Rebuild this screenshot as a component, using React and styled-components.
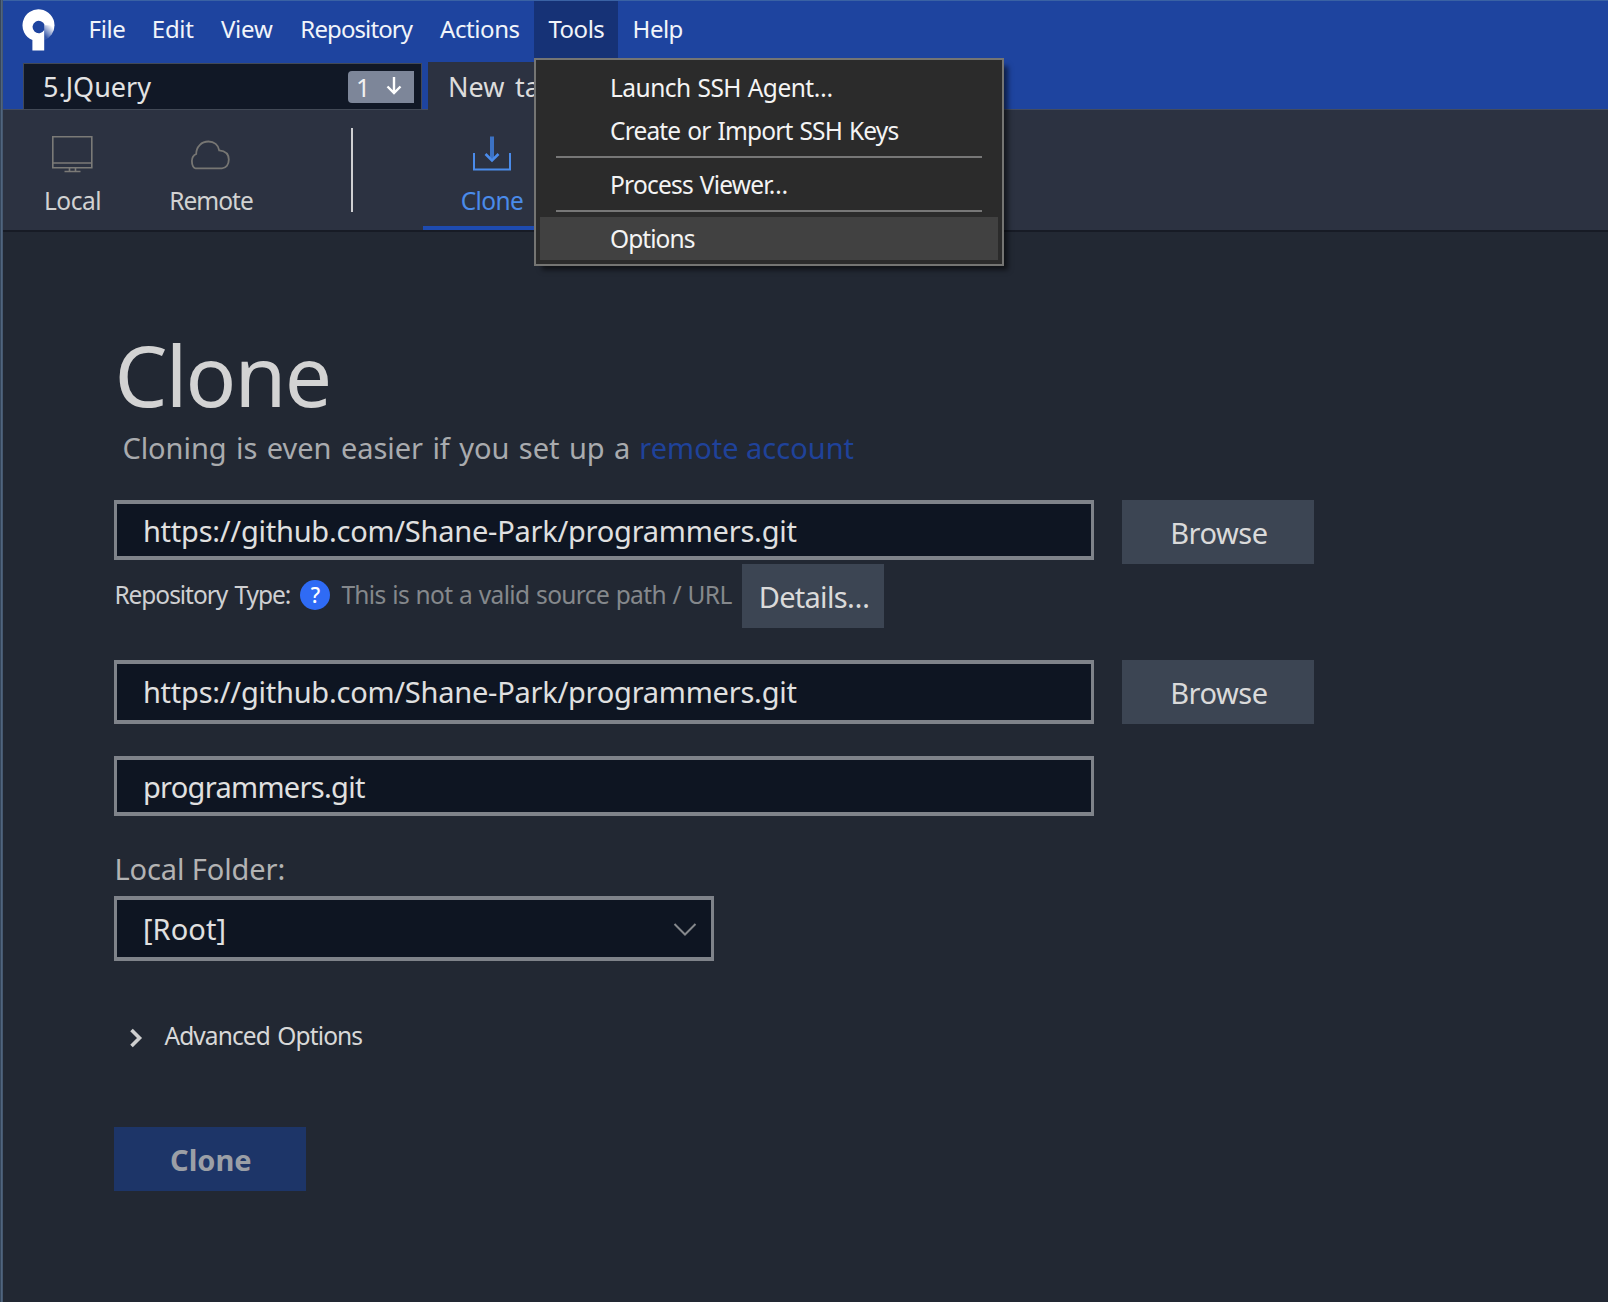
import React from "react";
import styled, { createGlobalStyle } from "styled-components";

const GlobalStyle = createGlobalStyle`
  * { box-sizing: border-box; }
  html, body { margin: 0; height: 100%; background: #222833; }
  body { font-family: "Noto Sans", "Noto Sans CJK KR", sans-serif; overflow: hidden; }
  button, input { font-family: inherit; }
`;

const Window = styled.div`
  position: relative;
  display: flex;
  flex-direction: column;
  width: 1608px;
  height: 1302px;
  padding-left: 3px;
  background: linear-gradient(90deg, #36475c 0 1px, #50657f 1px 2px, #46586f 2px 3px, #222833 3px);
`;

const Text = styled.span`
  font-size: ${(p) => p.$size || 24.5}px;
  letter-spacing: ${(p) => p.$ls || 0}px;
  word-spacing: ${(p) => p.$ws || 0}px;
  color: ${(p) => p.$color || "inherit"};
  white-space: pre;
`;

/* Title bar with menus and tabs */
const Header = styled.header`
  display: flex;
  flex-direction: column;
  height: 110px;
  flex: none;
  background: #1e449f;
  border-top: 1px solid #3a62a4;
`;

const MenuBar = styled.nav`
  display: flex;
  height: 57px;
  padding-left: 19px;
  flex: none;
`;

const Logo = styled.svg`
  width: 34px;
  height: 42px;
  margin: 8px 19px 0 0;
  flex: none;
`;

const MenuItem = styled.div`
  display: flex;
  align-items: center;
  justify-content: center;
  width: ${(p) => p.$w}px;
  padding-bottom: 2px;
  flex: none;
  color: #f1f4fa;
  background: ${(p) => (p.$open ? "#163276" : "transparent")};
`;

const TabStrip = styled.div`
  display: flex;
  align-items: stretch;
  height: 52px;
  padding: 4px 0 0 20px;
  background: linear-gradient(#434c60, #434c60) bottom / 100% 1px no-repeat;
`;

const RepoTab = styled.div`
  display: flex;
  align-items: center;
  justify-content: space-between;
  width: 399px;
  margin: 1px 6px 0 0;
  padding: 0 7px 0 19px;
  background: #111826;
  border: 1px solid #424956;
  color: #e3e3e3;
  flex: none;
`;

const NewTab = styled.div`
  display: flex;
  align-items: center;
  width: 180px;
  padding: 1px 0 0 20px;
  background: #2c3241;
  color: #dcdcdc;
`;

const Badge = styled.div`
  display: flex;
  align-items: center;
  gap: 16px;
  width: 66px;
  height: 32px;
  padding-left: 8px;
  border-radius: 4px 0 0 4px;
  background: #7d8699;
  color: #f1f1f1;

  svg { width: 16px; height: 20px; }
`;

/* Toolbar */
const Toolbar = styled.div`
  display: flex;
  height: 122px;
  flex: none;
  background: #2c3241;
  border-bottom: 2px solid #171b25;
`;

const ToolItem = styled.div`
  display: flex;
  flex-direction: column;
  align-items: center;
  width: ${(p) => p.$w}px;
  color: ${(p) => (p.$active ? "#4a8bea" : "#d2d2d2")};
  border-bottom: ${(p) => (p.$active ? "4px solid #1e4bb0" : "none")};
  flex: none;
  padding-top: 23px;

  svg { width: 44px; height: 40px; margin: 0 0 11px -1px; flex: none; }
  span { line-height: 34px; }
`;

const ToolDivider = styled.div`
  width: 2px;
  height: 84px;
  margin: 18px 70px 0 71px;
  background: #cfd0d2;
  flex: none;
`;

/* Drop-down menu */
const Popup = styled.div`
  position: absolute;
  left: 534px;
  top: 58px;
  width: 470px;
  height: 208px;
  padding: 5px 4px;
  background: #2b2b2b;
  border: 2px solid #757573;
  box-shadow: 6px 6px 5px -2px rgba(0, 0, 0, 0.55);
  color: #f4f4f4;
`;

const PopupItem = styled.div`
  display: flex;
  align-items: center;
  height: 43.5px;
  padding: 1px 0 0 70px;
  background: ${(p) => (p.$hover ? "#414141" : "transparent")};
`;

const PopupRule = styled.hr`
  height: 2px;
  margin: 4px 16px 4.5px;
  border: 0;
  background: #777;
`;

/* Clone page */
const Page = styled.main`
  display: flex;
  flex-direction: column;
  align-items: flex-start;
  padding: 87px 0 0 111.4px;
`;

const Title = styled.h1`
  margin: 0;
  height: 110px;
  line-height: 111px;
  font-size: 84px;
  font-weight: 400;
  letter-spacing: -1.8px;
  color: #d3d3d3;
`;

const Subtitle = styled.p`
  display: flex;
  gap: 9px;
  margin: 0 0 33px 8px;
  height: 38px;
  line-height: 38px;
  color: #a9abae;
`;

const Row = styled.div`
  display: flex;
  align-items: flex-start;
  gap: 28px;
  margin-bottom: ${(p) => p.$mb || 0}px;
`;

const Field = styled.div`
  display: flex;
  align-items: center;
  justify-content: space-between;
  width: ${(p) => p.$w || 980}px;
  height: ${(p) => p.$h}px;
  padding: 0 14px ${(p) => p.$pb || 0}px 25.5px;
  background: #0e1522;
  border: 4px solid #7f838a;
  border-left-width: 3px;
  border-right-width: 3px;
  color: #e0e0e0;
`;

const Button = styled.button`
  display: flex;
  align-items: center;
  justify-content: center;
  width: ${(p) => p.$w || 192}px;
  height: 64px;
  padding: 0 0 0 1px;
  border: 0;
  background: ${(p) => (p.$primary ? "#1d3568" : "#3c4553")};
  color: ${(p) => (p.$primary ? "#9b9fa6" : "#dadada")};
  font-weight: ${(p) => (p.$primary ? 700 : 400)};
`;

const TypeRow = styled.div`
  display: flex;
  align-items: center;
  height: 64px;
  margin-bottom: 32px;
`;

const TypeInfo = styled.div`
  display: flex;
  align-items: center;
  height: 60px;
  width: 628px;
  margin-bottom: 3px;
`;

const Help = styled.div`
  display: flex;
  align-items: center;
  justify-content: center;
  width: 30px;
  height: 30px;
  margin: 1px 11px 0 11px;
  border-radius: 50%;
  background: #2f6bf5;
  color: #fff;
  font-size: 21px;
  font-weight: 500;
  flex: none;
`;

const TypeLabel = styled.div`
  width: 175px;
  color: #cfd0d2;
  flex: none;
`;

const FolderLabel = styled.div`
  height: 40px;
  line-height: 40px;
  margin: 33px 0 7px;
  color: #b3b3b3;
`;

const Expander = styled.div`
  display: flex;
  align-items: center;
  gap: 21px;
  height: 40px;
  margin: 54px 0 72px 15px;
  color: #d8d8d8;

  svg { width: 14px; height: 20px; margin-top: 5px; }
`;

const menus = [
  ["File", 64, -0.4],
  ["Edit", 67.5, -0.3],
  ["View", 80.5, -0.2],
  ["Repository", 138.5, -0.9],
  ["Actions", 108.8, -0.42],
  ["Tools", 84.2, -0.48],
  ["Help", 78.5, -0.5],
];

function SourcetreeLogo() {
  return (
    <Logo viewBox="0 0 34 42">
      <defs>
        <linearGradient id="fade" x1="0.8" y1="0" x2="0.25" y2="0.85">
          <stop offset="0.1" stopColor="#fff" />
          <stop offset="1" stopColor="#fff" stopOpacity="0.1" />
        </linearGradient>
      </defs>
      <path fill="url(#fade)" d="M32.500 15.900A16 16 0 0 1 22.200 31.200V15.900z" />
      <path
        fill="#fff"
        d="M32.500 16.200A16 16 0 1 0 10.400 31.100V41.600H22.200V21A6.200 6.200 0 1 1 22.700 16.200z"
      />
    </Logo>
  );
}

export default function App() {
  return (
    <>
      <GlobalStyle />
      <Window>
        <Header>
          <MenuBar>
            <SourcetreeLogo />
            {menus.map(([name, w, ls]) => (
              <MenuItem key={name} $w={w} $open={name === "Tools"}>
                <Text $size={24} $ls={ls}>{name}</Text>
              </MenuItem>
            ))}
          </MenuBar>
          <TabStrip>
            <RepoTab>
              <Text $size={27}>5.JQuery</Text>
              <Badge>
                <Text $size={25}>1</Text>
                <svg viewBox="0 0 16 20" fill="none" stroke="#fff" strokeWidth="2.4">
                  <path d="M8 0v16M1.5 9.5L8 16l6.500-6.500" />
                </svg>
              </Badge>
            </RepoTab>
            <NewTab>
              <Text $size={27} $ws={3.5}>New tab</Text>
            </NewTab>
          </TabStrip>
        </Header>

        <Toolbar>
          <ToolItem $w={139}>
            <svg viewBox="0 0 44 40" fill="none" stroke="#7b7a77" strokeWidth="1.6">
              <path d="M2.800 3.800h39v31h-39zM2.800 30h39M19.500 35v3M25.500 35v3M14.500 38.500h16" />
            </svg>
            <Text $ls={-0.5}>Local</Text>
          </ToolItem>
          <ToolItem $w={138}>
            <svg viewBox="0 0 44 40" fill="none" stroke="#777673" strokeWidth="1.8">
              <path d="M6.500 35.300h26.500c4.200 0 6.800-3.800 6.800-8.700 0-5-3.500-8.600-9.600-9.200C29.500 12 25 8.500 19.500 8.500c-7 0-12.300 5.200-12.300 12.500-2.600 1.200-4.300 3.700-4.300 7 0 4.500 1.800 7.300 3.600 7.300z" />
            </svg>
            <Text $ls={-1}>Remote</Text>
          </ToolItem>
          <ToolDivider />
          <ToolItem $w={138} $active>
            <svg viewBox="0 0 44 40" fill="none" stroke="#4a8bea" strokeWidth="2">
              <path d="M4 20v16.500h36V20" />
              <path d="M22 3.500v22" stroke="#3c72c4" strokeWidth="4" />
              <path d="M15.500 21l6.500 6.500 6.500-6.500" strokeWidth="2.600" />
            </svg>
            <Text $ls={-0.6}>Clone</Text>
          </ToolItem>
        </Toolbar>

        <Page>
          <Title>Clone</Title>
          <Subtitle>
            <Text $size={29} $ls={-0.05} $ws={2}>Cloning is even easier if you set up a</Text>
            <Text $size={29} $ls={-0.1} $ws={1}>
              <Text as="a" $size={29} $color="#1f429a">remote account</Text>
            </Text>
          </Subtitle>
          <Row>
            <Field $h={60}><Text $size={29} $ls={-0.24}>https://github.com/Shane-Park/programmers.git</Text></Field>
            <Button><Text $size={29} $ls={-0.5}>Browse</Text></Button>
          </Row>
          <TypeRow>
            <TypeInfo>
              <TypeLabel><Text $ls={-1.05} $ws={2}>Repository Type:</Text></TypeLabel>
              <Help>?</Help>
              <Text $ls={-0.65} $ws={0.9} $color="#85888c">This is not a valid source path / URL</Text>
            </TypeInfo>
            <Button $w={142}><Text $size={29} $ls={-0.7}>Details…</Text></Button>
          </TypeRow>
          <Row $mb={32}>
            <Field $h={64} $pb={2}><Text $size={29} $ls={-0.24}>https://github.com/Shane-Park/programmers.git</Text></Field>
            <Button><Text $size={29} $ls={-0.5}>Browse</Text></Button>
          </Row>
          <Field $h={60}><Text $size={29} $ls={-0.7}>programmers.git</Text></Field>
          <FolderLabel><Text $size={29} $ls={-0.1}>Local Folder:</Text></FolderLabel>
          <Field $w={600} $h={65}>
            <Text $size={29} $ls={0.1}>[Root]</Text>
            <svg width="24" height="14" viewBox="0 0 24 14" fill="none" stroke="#85888c" strokeWidth="2">
              <path d="M1.500 2l10.500 10.500L22.500 2" />
            </svg>
          </Field>
          <Expander>
            <svg viewBox="0 0 14 20" fill="none" stroke="#cfcfcf" strokeWidth="3.600">
              <path d="M2.500 2l8 8-8 8" />
            </svg>
            <Text $ls={-0.9} $ws={2}>Advanced Options</Text>
          </Expander>
          <Button $primary><Text $size={29}>Clone</Text></Button>
        </Page>

        <Popup>
          <PopupItem><Text $ls={-0.5} $ws={0.8}>Launch SSH Agent…</Text></PopupItem>
          <PopupItem><Text $ls={-0.85} $ws={1.5}>Create or Import SSH Keys</Text></PopupItem>
          <PopupRule />
          <PopupItem><Text $ls={-0.75} $ws={1}>Process Viewer…</Text></PopupItem>
          <PopupRule />
          <PopupItem $hover><Text $ls={-0.95}>Options</Text></PopupItem>
        </Popup>
      </Window>
    </>
  );
}
